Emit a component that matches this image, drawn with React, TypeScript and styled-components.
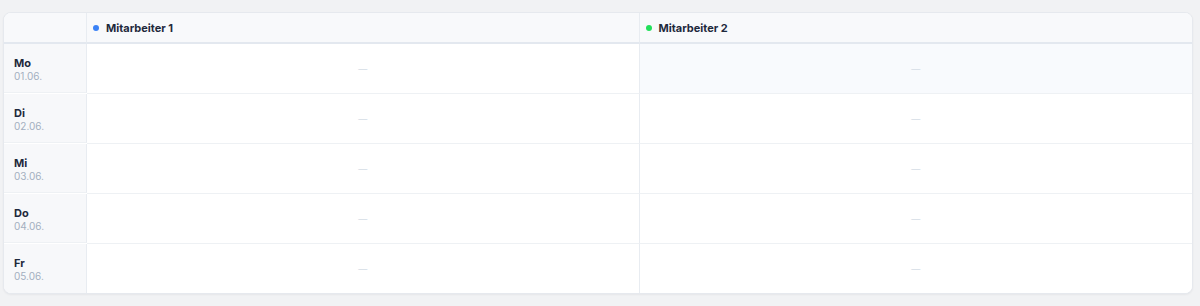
import React from "react";
import styled, { createGlobalStyle } from "styled-components";

const GlobalStyle = createGlobalStyle`
  html, body {
    margin: 0;
    padding: 0;
    background: #f1f2f4;
    font-family: "Segoe UI", Inter, "Noto Sans", sans-serif;
  }
`;

const employees = [
  { name: "Mitarbeiter 1", color: "#3b82f6" },
  { name: "Mitarbeiter 2", color: "#22e05a" },
];

const days = [
  { label: "Mo", date: "01.06." },
  { label: "Di", date: "02.06." },
  { label: "Mi", date: "03.06." },
  { label: "Do", date: "04.06." },
  { label: "Fr", date: "05.06." },
];

export default function App() {
  return (
    <>
      <GlobalStyle />
      <Page>
        <Card>
          <Grid>
            <HeadCorner />
            {employees.map((e) => (
              <HeadCell key={e.name}>
                <Dot color={e.color} />
                <HeadName>{e.name}</HeadName>
              </HeadCell>
            ))}
            {days.map((d, r) => (
              <React.Fragment key={d.label}>
                <DayCell last={r === days.length - 1}>
                  <DayLabel>{d.label}</DayLabel>
                  <DayDate>{d.date}</DayDate>
                </DayCell>
                {employees.map((e, c) => (
                  <SlotCell
                    key={e.name}
                    last={r === days.length - 1}
                    highlight={r === 0 && c === 1}
                  >
                    <Empty>—</Empty>
                  </SlotCell>
                ))}
              </React.Fragment>
            ))}
          </Grid>
        </Card>
      </Page>
    </>
  );
}

const Page = styled.div`
  padding: 12px 7px 12px 3px;
`;

const Card = styled.div`
  background: #ffffff;
  border: 1px solid #e6e9ee;
  border-radius: 8px;
  overflow: hidden;
  box-shadow: 0 1px 2px rgba(15, 23, 42, 0.05);
`;

const Grid = styled.div`
  display: grid;
  grid-template-columns: 83px 1fr 1fr;
`;

const HeadCorner = styled.div`
  background: #f8f9fb;
  border-bottom: 2px solid #e3e8ef;
  border-right: 1px solid #e8ecf1;
  height: 29px;
`;

const HeadCell = styled.div`
  background: #f8f9fb;
  border-bottom: 2px solid #e3e8ef;
  border-right: 1px solid #e8ecf1;
  height: 29px;
  display: flex;
  align-items: center;
  gap: 7px;
  padding-left: 6px;

  &:nth-child(3) {
    border-right: none;
  }
`;

const Dot = styled.span<{ color: string }>`
  width: 6px;
  height: 6px;
  border-radius: 50%;
  background: ${(p) => p.color};
  flex-shrink: 0;
`;

const HeadName = styled.span`
  font-size: 11px;
  font-weight: 700;
  color: #1e293b;
`;

const DayCell = styled.div<{ last: boolean }>`
  background: #f7f8fa;
  border-right: 1px solid #e8ecf1;
  border-bottom: ${(p) => (p.last ? "none" : "1px solid #eef1f4")};
  height: 49px;
  display: flex;
  flex-direction: column;
  justify-content: center;
  padding-left: 10px;
  padding-top: 2px;
  box-sizing: border-box;
`;

const DayLabel = styled.span`
  font-size: 11px;
  font-weight: 700;
  color: #1e293b;
  line-height: 13px;
`;

const DayDate = styled.span`
  font-size: 10px;
  color: #a3afc0;
  line-height: 12px;
`;

const SlotCell = styled.div<{ last: boolean; highlight: boolean }>`
  background: ${(p) => (p.highlight ? "#f8fafd" : "#ffffff")};
  border-right: 1px solid #e8ecf1;
  border-bottom: ${(p) => (p.last ? "none" : "1px solid #eef1f4")};
  height: 49px;
  display: flex;
  align-items: center;
  justify-content: center;

  &:nth-child(3n) {
    border-right: none;
  }
`;

const Empty = styled.span`
  font-size: 9px;
  color: #d5dde6;
  line-height: 1;
`;
